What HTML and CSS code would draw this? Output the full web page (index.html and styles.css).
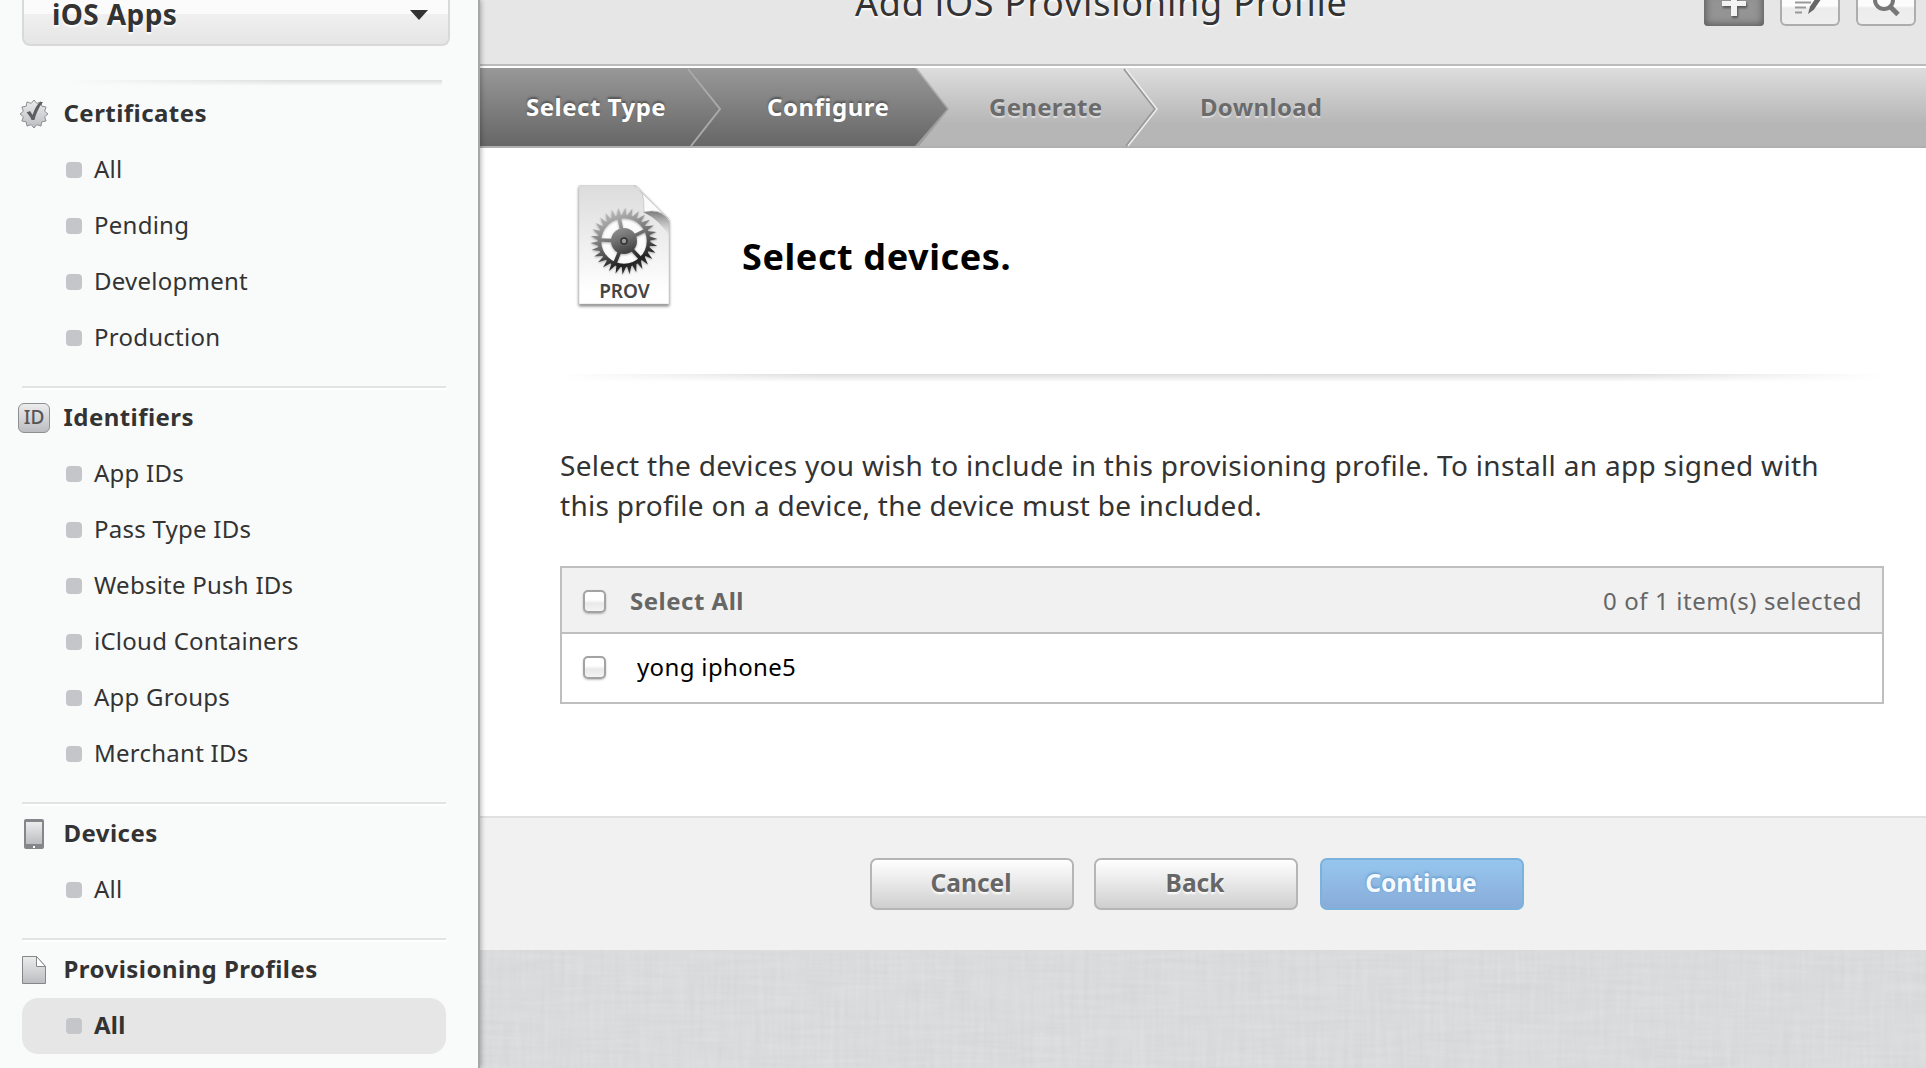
FILE: index.html
```html
<!DOCTYPE html>
<html lang="en">
<head>
<meta charset="utf-8">
<title>Add iOS Provisioning Profile</title>
<link rel="stylesheet" href="styles.css">
</head>
<body>
<nav class="sidebar">
  <div class="platform"><span>iOS Apps</span>
    <svg width="18" height="10" viewBox="0 0 18 10"><path d="M0 0h18L9 10z" fill="#333"/></svg>
  </div>
  <div class="sidebar-rule"></div>
  <section class="group">
    <h2><svg class="icon" width="32" height="32" viewBox="-16 -16 32 32">
      <defs><linearGradient id="metal" x1="0" y1="0" x2="0" y2="1"><stop offset="0" stop-color="#ececed"/><stop offset="1" stop-color="#bcbdc0"/></linearGradient></defs>
      <path d="M14 0 10.6 2.8 12.1 7 7.8 7.8 7 12.1 2.8 10.6 0 14-2.8 10.6-7 12.1-7.8 7.8-12.1 7-10.6 2.8-14 0-10.6-2.8-12.1-7-7.8-7.8-7-12.1-2.8-10.6 0-14 2.8-10.6 7-12.1 7.8-7.8 12.1-7 10.6-2.8z" fill="url(#metal)" stroke="#8e8f92"/>
      <path d="M-7.500-1.500-4-3-1.400 1C.8-5.500 3-9.500 6-12L9-12C4.800-7 2 0 .4 6L-2.500 6C-3.500 3-5.500 .5-7.500-1.500z" fill="#5d5e61"/>
    </svg>Certificates</h2>
    <ul><li>All</li><li>Pending</li><li>Development</li><li>Production</li></ul>
  </section>
  <section class="group">
    <h2><span class="icon id-badge">ID</span>Identifiers</h2>
    <ul><li>App IDs</li><li>Pass Type IDs</li><li>Website Push IDs</li><li>iCloud Containers</li><li>App Groups</li><li>Merchant IDs</li></ul>
  </section>
  <section class="group">
    <h2><svg class="icon" width="32" height="32" viewBox="0 0 32 32">
      <rect x="6" y="1" width="20" height="30" rx="2" fill="#85868a"/><rect x="8" y="4" width="16" height="22" fill="url(#metal)"/><rect x="15" y="28" width="2" height="2" fill="#fff"/>
    </svg>Devices</h2>
    <ul><li>All</li></ul>
  </section>
  <section class="group">
    <h2><svg class="icon" width="32" height="32" viewBox="0 0 32 32">
      <path d="M4.500 2.500H18.500L27.500 12.500V29.500H4.500z" fill="url(#metal)" stroke="#85868a"/><path d="M18.500 2.500V12.500H27.500z" fill="#fff" stroke="#85868a"/>
    </svg>Provisioning Profiles</h2>
    <ul><li class="active">All</li></ul>
  </section>
</nav>
<main class="content">
  <header class="titlebar">
    <h1>Add iOS Provisioning Profile</h1>
    <div class="tools">
      <span class="tool pressed"><svg width="60" height="34" viewBox="0 -8 60 34"><path d="M27-8h6v9h9v5h-9v10h-6V6h-9V1h9z" fill="#f3f3f3"/></svg></span>
      <span class="tool"><svg width="60" height="34" viewBox="0 -8 60 34"><path d="M15 2.500h16M15 7.500h11M15 12.500h7" stroke="#999" stroke-width="2"/><path d="M46-8 34 9.500 28 14 30 6.500 40-8z" fill="#666"/></svg></span>
      <span class="tool"><svg width="60" height="34" viewBox="0 -8 60 34"><circle cx="28" cy="0" r="9" fill="none" stroke="#777" stroke-width="4"/><path d="M34 6.500 42 14.500" stroke="#777" stroke-width="5"/></svg></span>
    </div>
  </header>
  <div class="steps">
    <svg class="steps-bg" width="1446" height="80" viewBox="0 0 1446 80">
      <defs><linearGradient id="dark" x1="0" y1="0" x2="0" y2="1"><stop offset="0" stop-color="#989898"/><stop offset="1" stop-color="#666"/></linearGradient></defs>
      <path d="M0 0H437L469 41 439 78H0z" fill="#777" opacity=".4"/>
      <path d="M0 0H435L467 41 435 78H0z" fill="url(#dark)"/>
      <path d="M208 1 240 41 211 78" fill="none" stroke="#aaa" stroke-width="2"/>
      <path d="M644 1 675 41 646 78" fill="none" stroke="#999" stroke-width="2"/>
      <path d="M646 1 677 41 648 78" fill="none" stroke="#eee" stroke-width="1.500"/>
    </svg>
    <ol><li class="done">Select Type</li><li class="done">Configure</li><li>Generate</li><li>Download</li></ol>
  </div>
  <section class="panel">
    <div class="intro">
      <svg class="prov" width="112" height="136" viewBox="568 176 112 136">
        <defs>
          <linearGradient id="paper" x1="0" y1="0" x2="0" y2="1"><stop offset="0" stop-color="#dcdcdc"/><stop offset=".9" stop-color="#fff"/></linearGradient>
          <linearGradient id="gearfill" gradientUnits="userSpaceOnUse" x1="-12" y1="-32" x2="10" y2="30"><stop offset="0" stop-color="#bbb"/><stop offset=".25" stop-color="#999"/><stop offset=".5" stop-color="#6c6c6c"/><stop offset=".85" stop-color="#222"/><stop offset="1" stop-color="#333"/></linearGradient>
          <linearGradient id="curl" x1="0" y1="1" x2=".8" y2=".2"><stop offset="0" stop-color="#fff"/><stop offset=".6" stop-color="#fafafa"/><stop offset="1" stop-color="#c4c4c4"/></linearGradient>
          <linearGradient id="fold" x1="0" y1="0" x2="0" y2="1"><stop offset="0" stop-color="#555" stop-opacity=".75"/><stop offset="1" stop-color="#999" stop-opacity="0"/></linearGradient>
          <g id="tooth5"><path id="tooth" d="M-2.500-25 1.500-33.500 2.300-25z"/><use href="#tooth" transform="rotate(12)"/><use href="#tooth" transform="rotate(24)"/><use href="#tooth" transform="rotate(36)"/><use href="#tooth" transform="rotate(48)"/></g>
          <mask id="gear" maskUnits="userSpaceOnUse" x="-36" y="-36" width="72" height="72"><g fill="#fff">
            <use href="#tooth5"/><use href="#tooth5" transform="rotate(60)"/><use href="#tooth5" transform="rotate(120)"/><use href="#tooth5" transform="rotate(180)"/><use href="#tooth5" transform="rotate(240)"/><use href="#tooth5" transform="rotate(300)"/>
            <circle r="24.500" fill="none" stroke="#fff" stroke-width="3.500"/><circle r="13"/>
            <path d="M0 0-5-24M0 0 22-11M0 0 16 17M0 0-9 22M0 0-24-1" stroke="#fff" stroke-width="3.600"/></g></mask>
        </defs>
        <path class="sheet" d="M579 185.500H636L669 219V304H579z" fill="url(#paper)" stroke="#ccc" stroke-width=".6"/>
        <path d="M643 212Q661 208 669 221V236Q660 220 643 212z" fill="url(#fold)"/>
        <circle cx="624" cy="241" r="23" fill="#fcfcfc"/>
        <g class="gear" transform="translate(624 241)"><rect x="-36" y="-36" width="72" height="72" fill="url(#gearfill)" mask="url(#gear)"/><circle r="3" fill="#999" stroke="#333" stroke-width="1.500"/></g>
        <path d="M634 185.500Q645 187 644 212Q661 208 669 219z" fill="url(#curl)" stroke="#bbb" stroke-width=".6"/>
        <text x="624.500" y="298" text-anchor="middle" class="prov-label">PROV</text>
      </svg>
      <h2>Select devices.</h2>
    </div>
    <div class="rule"></div>
    <p>Select the devices you wish to include in this provisioning profile. To install an app signed with<br>this profile on a device, the device must be included.</p>
    <div class="devices">
      <div class="row head"><i class="check"></i><b>Select All</b><span class="count">0 of 1 item(s) selected</span></div>
      <div class="row"><i class="check"></i><span class="name">yong iphone5</span></div>
    </div>
  </section>
  <footer class="actions"><button>Cancel</button><button>Back</button><button class="primary">Continue</button></footer>
  <svg class="linen" width="1446" height="118">
    <defs>
      <filter id="weave" x="0" y="0" width="100%" height="100%" color-interpolation-filters="sRGB">
        <feTurbulence type="fractalNoise" baseFrequency=".015 .2" numOctaves="2" seed="3" result="h"/>
        <feTurbulence type="fractalNoise" baseFrequency=".2 .015" numOctaves="2" seed="8" result="v"/>
        <feComposite in="h" in2="v" operator="arithmetic" k2=".5" k3=".5"/>
        <feColorMatrix values=".06 0 0 0 .823 .06 0 0 0 .828 .06 0 0 0 .834 0 0 0 0 1"/>
      </filter>
    </defs>
    <rect width="1446" height="118" filter="url(#weave)"/>
  </svg>
</main>
</body>
</html>
```
FILE: styles.css
```css
* { box-sizing: border-box; }
body { margin: 0; width: 1926px; height: 1068px; overflow: hidden; display: flex; font-family: "Noto Sans", "Open Sans", sans-serif; font-size: 24px; color: #333; background: #fff; }
h1, h2, p, ul, ol { margin: 0; padding: 0; font-size: inherit; list-style: none; }

.sidebar { width: 480px; height: 1068px; flex: none; background: #f9fbfa; border-right: 2px solid #a8a8a8; padding: 0 32px 0 22px; position: relative; z-index: 1; box-shadow: 1px 0 5px rgba(0,0,0,.3); }
.platform { width: 428px; height: 46px; border: 2px solid #d9d9d9; border-top: 0; border-radius: 0 0 8px 8px; background: linear-gradient(#fbfbfb 14px, #f0f0f0 14px, #e5e5e5); display: flex; justify-content: space-between; align-items: flex-start; padding: 0 20px 0 28px; font-size: 28px; font-weight: 700; line-height: 28px; letter-spacing: .4px; text-shadow: 0 2px 2px #fff; }
.platform svg { margin-top: 10px; }
.sidebar-rule { height: 6px; margin: 34px 4px 0 43px; background: linear-gradient(90deg, #f9fbfa, rgba(249,251,250,0) 60%), linear-gradient(#dcdedd, #f9fbfa); }
.group { width: 424px; padding-bottom: 20px; }
.group + .group { border-top: 2px solid #e2e4e4; box-shadow: inset 0 2px #fff; padding-top: 2px; }
.group h2 { height: 56px; display: flex; align-items: center; font-weight: 700; margin-left: -4px; padding-bottom: 4px; letter-spacing: .45px; }
.icon { flex: none; width: 32px; height: 32px; margin: 4px 13.5px 0 0; }
.id-badge { height: 30px; border: 1px solid #8e8f92; border-radius: 6px; background: linear-gradient(#ececed, #bcbdc0); font-size: 19px; font-weight: 500; line-height: 27px; text-align: center; color: #555; letter-spacing: 0; }
.group li { height: 56px; display: flex; align-items: center; padding: 0 0 3px 44px; letter-spacing: .25px; }
.group li::before { content: ""; width: 16px; height: 16px; border-radius: 4px; background: #c5c6c9; margin: 3px 12px 0 0; }
.group .active { background: #e6e6e6; border-radius: 16px; font-weight: 700; }

.content { flex: 1; min-width: 0; display: flex; flex-direction: column; }
.titlebar { height: 68px; background: #e6e6e6; border-bottom: 2px solid #fff; box-shadow: inset 0 -2px #bbb; position: relative; }
h1 { font-size: 36px; font-weight: 400; line-height: 40px; margin: -17px 0 0 375px; letter-spacing: .8px; text-shadow: 0 2px 2px #fff; white-space: nowrap; }
.tools { position: absolute; top: -8px; right: 10px; display: flex; gap: 16px; }
.tool { width: 60px; height: 34px; border-radius: 0 0 6px 6px; background: linear-gradient(#fcfcfc 14px, #ececec 16px, #efefef); box-shadow: inset 0 0 0 2px #adadad; }
.tool svg { display: block; }
.pressed { background: #949494; box-shadow: inset 0 0 7px 2px #5e5e5e; border-radius: 0 0 4px 4px; }
.pressed path { filter: drop-shadow(1px 2px 1px #555); }
.steps { height: 80px; display: grid; background: linear-gradient(#ddd, #b6b6b6 70%); box-shadow: inset 0 -2px #b0b0b0; }
.steps > * { grid-area: 1 / 1; }
.steps ol { display: grid; grid-template-columns: 241px 222px 211px auto; padding-left: 46px; line-height: 78px; font-weight: 700; color: #6b6b6b; text-shadow: 0 2px 1px #ddd; letter-spacing: .3px; position: relative; }
.steps .done { color: #fff; text-shadow: 0 -2px 2px #555; letter-spacing: .5px; }
.panel { height: 668px; padding: 28px 42px 0 80px; background: #fff; }
.intro { display: flex; height: 136px; }
.prov { margin-left: 8px; }
.sheet { filter: drop-shadow(0 2px 1.500px rgba(0,0,0,.5)); }
.gear { filter: drop-shadow(0 1px 1px rgba(0,0,0,.3)); }
.prov-label { font-size: 19px; font-weight: 600; fill: #444; }
.intro h2 { margin-left: 62px; font-size: 36px; font-weight: 700; color: #000; line-height: 50px; padding-top: 56px; letter-spacing: .6px; }
.rule { height: 8px; margin-top: 62px; background: linear-gradient(90deg, #fff, rgba(255,255,255,0) 20%, rgba(255,255,255,0) 80%, #fff), linear-gradient(#dcdcdc, #fff); }
.panel p { margin-top: 63px; font-size: 28px; line-height: 40px; letter-spacing: .3px; white-space: nowrap; }
.devices { margin-top: 41px; border: 2px solid #bfbfbf; height: 138px; }
.row { height: 68px; display: flex; align-items: center; padding: 0 20px 2px 21px; }
.head { height: 66px; background: #f1f1f1; border-bottom: 2px solid #bfbfbf; color: #666; padding-bottom: 0; }
.row b { font-weight: 700; margin-left: 24px; letter-spacing: .5px; }
.check { width: 23px; height: 23px; border: 2px solid #a3a3a3; border-radius: 5px; background: linear-gradient(#fff 40%, #e9e9e9 60%, #f4f4f4); box-shadow: 0 1px 2px rgba(0,0,0,.25); }
.head .check { margin-top: 2px; }
.count { margin-left: auto; letter-spacing: .6px; }
.name { margin-left: 31px; margin-top: -1px; color: #000; letter-spacing: .35px; }
.actions { height: 134px; background: #f1f1f1; border-top: 2px solid #e1e1e1; display: flex; padding: 40px 0 0 390px; gap: 20px; }
button { width: 204px; height: 52px; border: 2px solid #b5b5b5; border-radius: 7px; background: linear-gradient(#fff, #cfcfcf); font: 700 24.5px "Noto Sans", sans-serif; color: #666; text-shadow: 0 2px 2px #fff; padding: 0 2px 3px 0; }
.primary { margin-left: 2px; border-color: #7bb2db; background: linear-gradient(#95c6ee, #89acd9); color: #f6faff; text-shadow: 0 -1px 3px #5a93c4; }
.linen { display: block; }
```
